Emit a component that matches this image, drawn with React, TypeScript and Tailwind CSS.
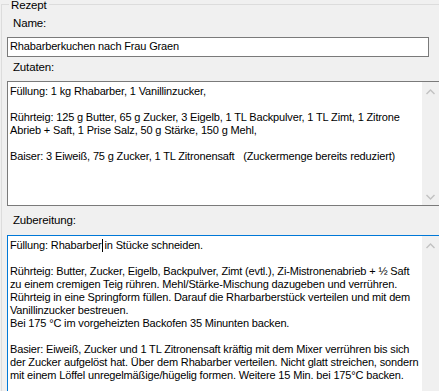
import React from "react";

const Chevron = ({ up }: { up?: boolean }) => (
  <svg width="9" height="6" viewBox="0 0 9 6" className="block">
    <path
      d={up ? "M0.5 5 L4.5 1 L8.5 5" : "M0.5 1 L4.5 5 L8.5 1"}
      fill="none"
      stroke="#c2c2c2"
      strokeWidth="1.4"
    />
  </svg>
);

const zutaten = `Füllung: 1 kg Rhabarber, 1 Vanillinzucker,

Rührteig: 125 g Butter, 65 g Zucker, 3 Eigelb, 1 TL Backpulver, 1 TL Zimt, 1 Zitrone
Abrieb + Saft, 1 Prise Salz, 50 g Stärke, 150 g Mehl,

Baiser: 3 Eiweiß, 75 g Zucker, 1 TL Zitronensaft   (Zuckermenge bereits reduziert)`;

const zub = `Rührteig: Butter, Zucker, Eigelb, Backpulver, Zimt (evtl.), Zi-Mistronenabrieb + ½ Saft
zu einem cremigen Teig rühren. Mehl/Stärke-Mischung dazugeben und verrühren.
Rührteig in eine Springform füllen. Darauf die Rharbarberstück verteilen und mit dem
Vanillinzucker bestreuen.
Bei 175 °C im vorgeheizten Backofen 35 Minunten backen.

Basier: Eiweiß, Zucker und 1 TL Zitronensaft kräftig mit dem Mixer verrühren bis sich
der Zucker aufgelöst hat. Über dem Rhabarber verteilen. Nicht glatt streichen, sondern
mit einem Löffel unregelmäßige/hügelig formen. Weitere 15 Min. bei 175°C backen.`;

export default function App() {
  return (
    <div
      className="w-[439px] h-[391px] overflow-hidden bg-[#f0f0f0] text-black text-[11px] leading-[13px] tracking-[-0.15px] pt-[4px]"
      style={{ fontFamily: '"Liberation Sans", Arial, sans-serif' }}
    >
      <div className="relative ml-[1px] border-l border-t border-[#dcdcdc] pl-[5px] pt-[12px] flex flex-col h-[400px]">
        <div className="absolute left-[7px] top-[-6px] px-[2px] bg-[#f0f0f0] text-[11.5px]">Rezept</div>
        <div className="pl-[6px] h-[13px] text-[11.5px]">Name:</div>
        <div className="mt-[7px] w-[422px] h-[20px] bg-white border border-[#7a7a7a] pl-[2px] pt-[2px]">
          Rhabarberkuchen nach Frau Graen
        </div>
        <div className="pl-[6px] mt-[4px] h-[13px] text-[11.5px]">Zutaten:</div>
        <div className="mt-[7px] h-[125px] bg-white border-l border-t border-b border-[#7a7a7a] flex">
          <div className="flex-1 whitespace-pre pl-[2px] pt-[3px] overflow-hidden">{zutaten}</div>
          <div className="w-[17px] bg-[#f0f0f0] flex flex-col items-center justify-between pt-[7px] pb-[5px]">
            <Chevron up />
            <Chevron />
          </div>
        </div>
        <div className="pl-[6px] mt-[8px] h-[13px] text-[11.5px]">Zubereitung:</div>
        <div className="mt-[8px] flex-1 bg-white border-l border-t border-[#0078d7] flex">
          <div className="flex-1 whitespace-pre pl-[2px] pt-[3px] overflow-hidden">
            <div>
              Füllung: Rhabarber
              <span className="inline-block w-[1px] h-[13px] bg-black align-top ml-[1px] mr-[1px]" />
              in Stücke schneiden.
            </div>
            <div>{"\n" + zub}</div>
          </div>
          <div className="w-[17px] bg-[#f0f0f0] flex flex-col items-center pt-[7px]">
            <Chevron up />
          </div>
        </div>
      </div>
    </div>
  );
}
